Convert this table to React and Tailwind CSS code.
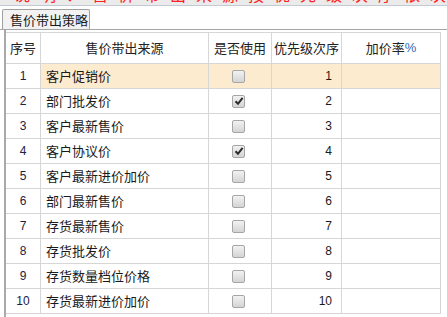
const rows = [
  { no: 1, name: "客户促销价", used: false, order: 1 },
  { no: 2, name: "部门批发价", used: true, order: 2 },
  { no: 3, name: "客户最新售价", used: false, order: 3 },
  { no: 4, name: "客户协议价", used: true, order: 4 },
  { no: 5, name: "客户最新进价加价", used: false, order: 5 },
  { no: 6, name: "部门最新售价", used: false, order: 6 },
  { no: 7, name: "存货最新售价", used: false, order: 7 },
  { no: 8, name: "存货批发价", used: false, order: 8 },
  { no: 9, name: "存货数量档位价格", used: false, order: 9 },
  { no: 10, name: "存货最新进价加价", used: false, order: 10 },
];

const cjk = "font-['Noto_Sans_CJK_SC','Noto_Sans',sans-serif]";
const num = "font-['Liberation_Sans',Arial,sans-serif]";

function Checkbox({ checked }) {
  return (
    <div className="w-[13px] h-[13px] rounded-[2px] border border-[#a6a6a6] bg-gradient-to-b from-[#f2f2f2] to-[#d4d4d4] flex items-center justify-center">
      {checked && (
        <svg width="10" height="10" viewBox="0 0 10 10">
          <path d="M1.5 5.2 L4 7.8 L8.6 1.8" fill="none" stroke="#2b2b2b" strokeWidth="2" />
        </svg>
      )}
    </div>
  );
}

export default function App() {
  return (
    <div className={`w-[447px] h-[317px] overflow-hidden bg-white ${cjk}`}>
      {/* clipped red note from the pane above: only glyph bottoms show */}
      <div className="h-[5px] bg-[#ebebeb] overflow-hidden">
        <p className="pl-[14px] text-[16px] leading-[16px] text-[#ff2020] whitespace-nowrap tracking-[10px] -translate-y-[14px]">
          说明：售价带出来源按优先级次序依次取价，取到即止
        </p>
      </div>
      <div className="h-px bg-[#c3cad4]" />

      {/* tab strip */}
      <div className="flex items-end pt-[3px] pl-[2px] border-b border-[#a5a5a5]">
        <div className="h-[20px] w-[88px] bg-[#f2f2f2] border border-b-0 border-[#a0a0a0] rounded-t-[2px] flex items-center pl-[7px] text-[13px] text-[#1a1a1a]">
          售价带出策略
        </div>
      </div>

      {/* grid */}
      <div className="ml-[4px] h-[287px] border-l-2 border-[#a9a9a9] pt-[2px]">
        <div className="w-[435px] border-t border-[#d6d6d6]">
          <div className="flex h-[31px] border-b border-[#d6d6d6] text-[13px] text-[#222]">
            <div className="w-[35px] border-r border-[#d6d6d6] flex items-center justify-center">序号</div>
            <div className="w-[168px] border-r border-[#d6d6d6] flex items-center justify-center">售价带出来源</div>
            <div className="w-[63px] border-r border-[#d6d6d6] flex items-center justify-center">是否使用</div>
            <div className="w-[70px] border-r border-[#d6d6d6] flex items-center justify-center">优先级次序</div>
            <div className="w-[99px] border-r border-[#d6d6d6] flex items-center justify-center">
              加价率<span className={`${num} text-[#2a6db8]`}>%</span>
            </div>
          </div>
          {rows.map((r, i) => (
            <div key={r.no} className="flex h-[25px] border-b border-[#d6d6d6]">
              <div className={`w-[35px] border-r border-[#d6d6d6] flex items-center justify-center text-[12px] text-[#1b2240] ${num}`}>
                {r.no}
              </div>
              <div className={`flex flex-1 ${i === 0 ? "bg-[#fdebd0]" : ""}`}>
                <div className="w-[168px] border-r border-[#d6d6d6] flex items-center pl-[5px] text-[13px] text-[#1a1a1a]">
                  {r.name}
                </div>
                <div className="w-[63px] border-r border-[#d6d6d6] flex items-center pl-[23px]">
                  <Checkbox checked={r.used} />
                </div>
                <div className={`w-[70px] border-r border-[#d6d6d6] flex items-center justify-end pr-[9px] text-[12px] text-[#1a1a1a] ${num}`}>
                  {r.order}
                </div>
                <div className="w-[99px] border-r border-[#d6d6d6]" />
              </div>
            </div>
          ))}
        </div>
      </div>
    </div>
  );
}
